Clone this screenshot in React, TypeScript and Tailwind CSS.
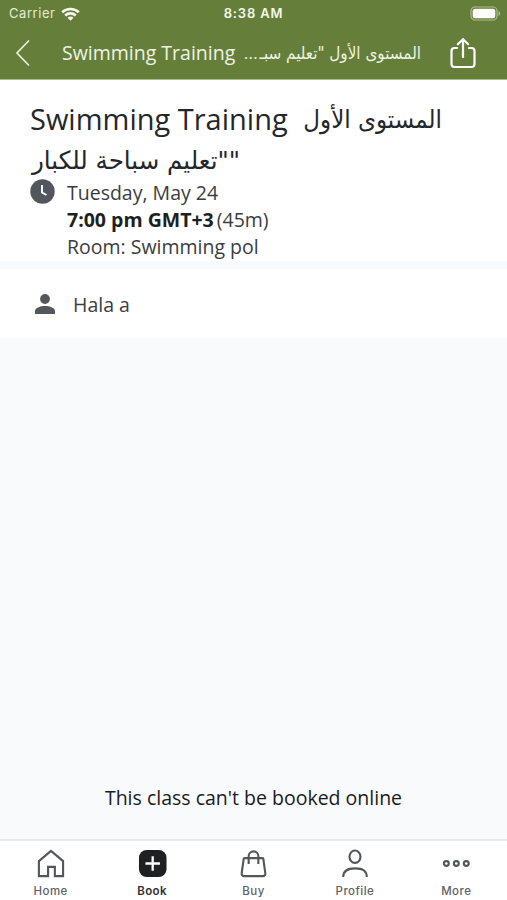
import React from 'react';

const arabic = "font-['DejaVu_Sans',sans-serif] inline-block whitespace-pre";

function StatusBar() {
  return (
    <div className="flex h-[27px] items-center justify-between pl-[9px] pr-[6px] font-['Inter',sans-serif] text-[13px] leading-[27px] text-[#f4f8ec]">
      <div className="flex w-[100px] items-center gap-[6px]">
        <span className="tracking-[0.55px] text-[#e3ecd5]">Carrier</span>
        <svg width="19" height="14" viewBox="0 0 19 14" fill="none" stroke="#f6faef" strokeWidth="2.700">
          <path d="M1.200 5.200C5.800.9 13.200.9 17.800 5.200" />
          <path d="M4.200 8.400c3-2.800 7.600-2.800 10.600 0" />
          <path d="M9.500 13.700L6.500 10.700c1.600-1.500 4.400-1.500 6 0z" fill="#f6faef" stroke="none" />
        </svg>
      </div>
      <span className="-ml-[3px] font-semibold tracking-[0.85px]">8:38 AM</span>
      <div className="flex w-[100px] justify-end">
        <svg width="31" height="15" viewBox="0 0 31 15">
          <rect x="1" y="1" width="26" height="13" rx="4" fill="none" stroke="#a9bd8e" strokeWidth="1.200" />
          <rect x="2.700" y="2.700" width="22.600" height="9.600" rx="2.500" fill="#fff" />
          <path d="M28.500 5v5c2.200-1 2.200-4 0-5z" fill="#a9bd8e" />
        </svg>
      </div>
    </div>
  );
}

function Header() {
  return (
    <header className="h-[80px] shrink-0 border-b border-[#a9bd8e] bg-[#657f3b]">
      <StatusBar />
      <div className="flex h-[52px] items-center pl-[15px] pr-[30px]">
        <svg className="shrink-0" width="15" height="28" viewBox="0 0 15 28" fill="none" stroke="#e8f0dc" strokeWidth="1.700">
          <path d="M14 1.500L2 14l12 12.500" />
        </svg>
        <h2 className="ml-[32px] flex items-center whitespace-pre font-['Open_Sans',sans-serif] text-[19.500px] leading-[28px] text-[#edf3e3]">
          <span className="inline-block w-[183px]">Swimming Training</span>
          <span dir="rtl" className="flex w-[176px]">
            <span className={`${arabic} w-[163px] shrink-0 origin-right scale-x-[0.895] text-[17px]`}>المستوى الأول "تعليم سبـ</span>
            <span className="shrink-0 text-[17px] tracking-[0.300px]">...</span>
          </span>
        </h2>
        <svg className="ml-auto shrink-0" width="28" height="32" viewBox="0 0 28 32" fill="none" stroke="#fff" strokeWidth="2.200" strokeLinecap="round" strokeLinejoin="round">
          <path d="M8 11H5.500a3 3 0 0 0-3 3v13a3 3 0 0 0 3 3h17a3 3 0 0 0 3-3V14a3 3 0 0 0-3-3H20" />
          <path d="M14 20V2.200M8.800 7.200L14 2.200l5.200 5" />
        </svg>
      </div>
    </header>
  );
}

function ClassDetails() {
  return (
    <section className="h-[181px] shrink-0 bg-white pl-[30px] pt-[19px] font-['Open_Sans',sans-serif] text-[#242729]">
      <h1 className="h-[79px] whitespace-pre text-[29px] leading-[40px]">
        <span className="flex h-[42px]">
          <span className="inline-block w-[273px]">Swimming Training</span>
          <span dir="rtl" className={`${arabic} w-[139px] origin-right scale-x-[0.920] pt-[1px] text-[25px]`}>المستوى الأول</span>
        </span>
        <span className="flex h-[37px]">
          <span dir="rtl" className={`${arabic} w-[210px] origin-right scale-x-[0.980] text-[25px]`}>""تعليم سباحة للكبار</span>
        </span>
      </h1>
      <div className="flex text-[19.500px] leading-[27px] text-[#3b3d40]">
        <svg className="mt-[1px] shrink-0" width="25" height="25" viewBox="0 0 25 25">
          <circle cx="12.500" cy="12.500" r="12.200" fill="#53565c" />
          <path d="M12 6v7.500l4.500 2.500" fill="none" stroke="#fff" strokeWidth="2" />
        </svg>
        <div className="ml-[12px] mt-[1px] whitespace-nowrap">
          <p>Tuesday, May 24</p>
          <p><span className="font-bold text-[#1d1f21]">7:00 pm GMT+3</span><span className="ml-[3px]">(45m)</span></p>
          <p>Room: Swimming pol</p>
        </div>
      </div>
    </section>
  );
}

const icons: Record<string, React.ReactNode> = {
  Home: <path d="M3 12.500L15.500 2 28 12.500V28h-8.500v-9.500h-7V28H3z" />,
  Book: (
    <>
      <rect x="1" y="1" width="28.500" height="28" rx="8" fill="#1e2022" stroke="none" />
      <path d="M15.200 7.500v15M7.700 15h15" stroke="#fff" strokeWidth="2.400" />
    </>
  ),
  Buy: (
    <>
      <path d="M5.800 9.500h18.400a1 1 0 0 1 1 1l2 14.500a2.500 2.500 0 0 1-2.500 3H5.300a2.500 2.500 0 0 1-2.500-3l2-14.500a1 1 0 0 1 1-1z" />
      <path d="M10 15.500V7.500a5 5 0 0 1 10 0v8" />
    </>
  ),
  Profile: (
    <>
      <ellipse cx="15.500" cy="8" rx="5.700" ry="6.400" />
      <path d="M3.300 29c0-6.300 4-9 12.200-9s12.200 2.700 12.200 9" />
    </>
  ),
  More: (
    <>
      <circle cx="4.500" cy="15" r="2.500" />
      <circle cx="14.800" cy="15" r="2.500" />
      <circle cx="25.100" cy="15" r="2.500" />
    </>
  ),
};

function TabBar() {
  return (
    <nav className="grid h-[61px] shrink-0 grid-cols-5 border-t-2 border-[#e7e8e9] bg-white">
      {Object.entries(icons).map(([label, icon]) => (
        <button key={label} className="flex flex-col items-center pt-[8px]">
          <svg width="29" height="29" viewBox="0 0 30 30" fill="none" stroke="#54575a" strokeWidth="2.200">{icon}</svg>
          <span className={`mt-[6px] font-['Inter',sans-serif] text-[11.500px] leading-[14px] tracking-[0.450px] ${label === 'Book' ? 'font-semibold text-[#303234]' : 'font-medium text-[#606366]'}`}>{label}</span>
        </button>
      ))}
    </nav>
  );
}

export default function App() {
  return (
    <div className="flex h-[900px] w-[507px] flex-col overflow-hidden bg-[#f8fafc]">
      <Header />
      <ClassDetails />
      <section className="mt-[8px] flex h-[69px] shrink-0 items-center bg-white pl-[35px] font-['Open_Sans',sans-serif] text-[19.500px] text-[#3b3d40]">
        <svg width="20" height="20" viewBox="0 0 20 20" fill="#53565a">
          <circle cx="10" cy="5" r="4.900" />
          <path d="M0 20v-3c0-3 5-5 10-5s10 2 10 5v3z" />
        </svg>
        <span className="ml-[18px] mt-[3px]">Hala a</span>
      </section>
      <main className="flex flex-1 items-end justify-center pb-[27px]">
        <p className="whitespace-nowrap font-['Open_Sans',sans-serif] text-[19.500px] leading-[28px] text-[#191b1d]">This class can't be booked online</p>
      </main>
      <TabBar />
    </div>
  );
}
